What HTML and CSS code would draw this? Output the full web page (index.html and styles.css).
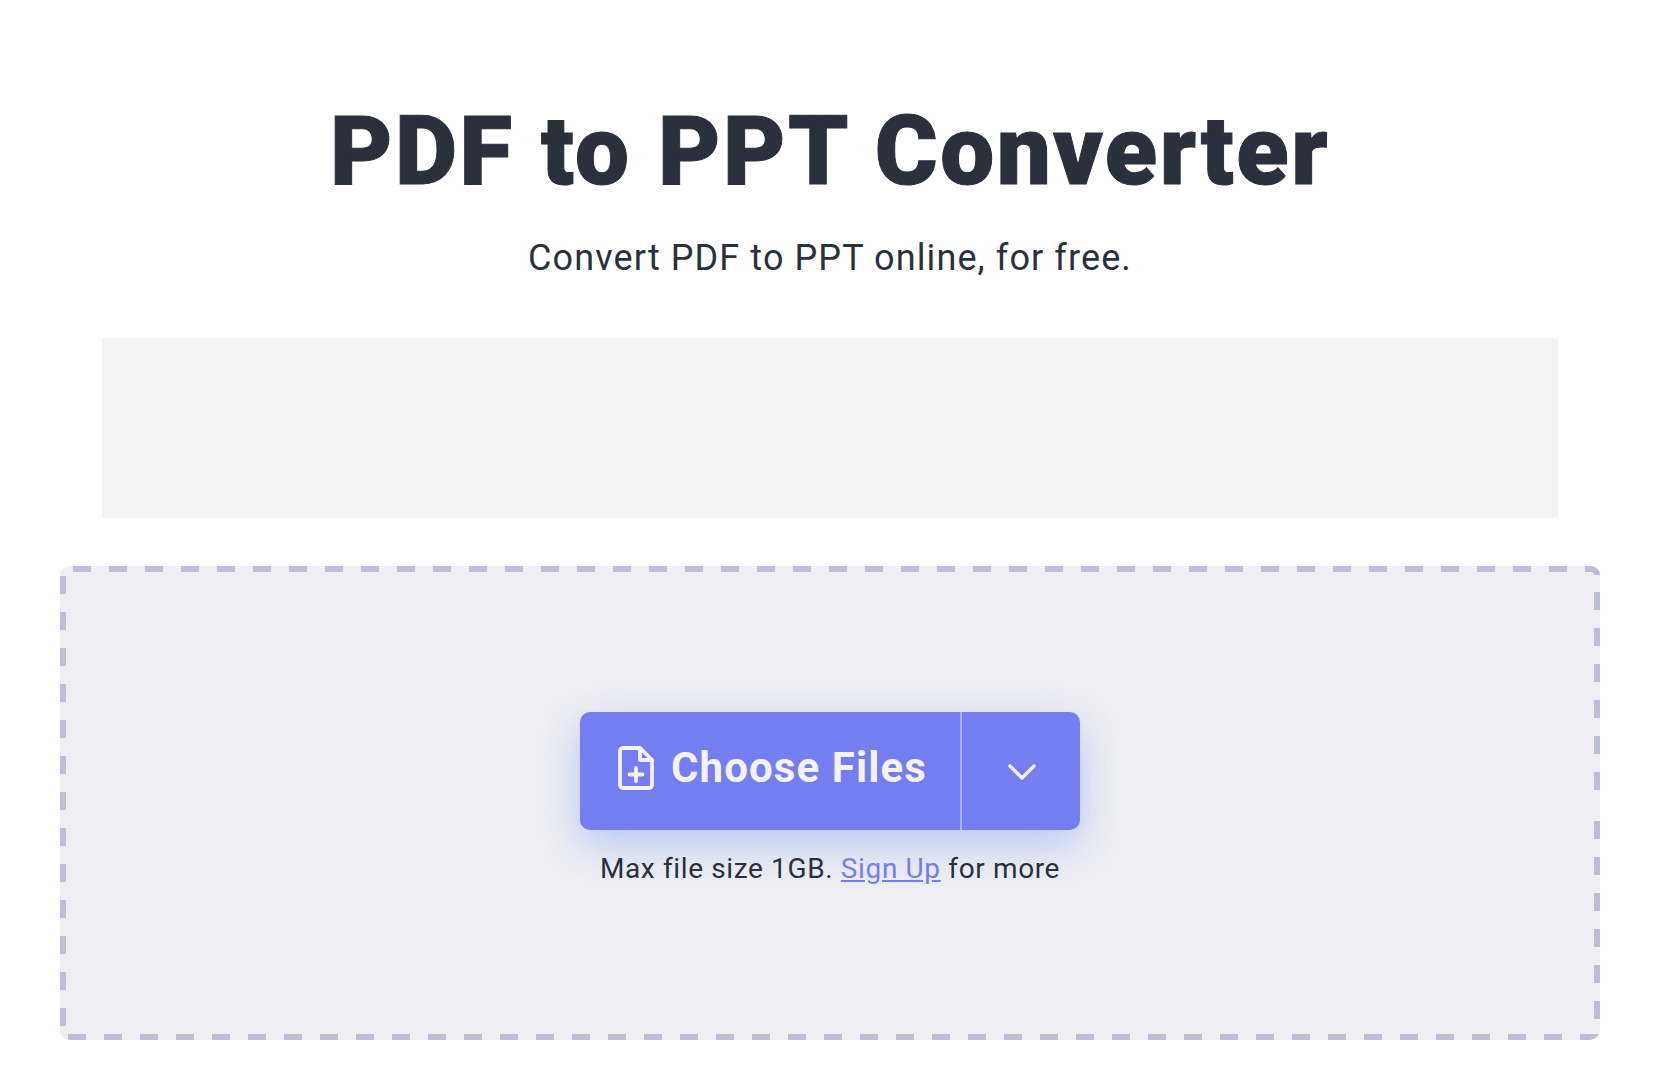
FILE: index.html
```html
<!DOCTYPE html>
<html lang="en">

<head>
  <meta charset="UTF-8">
  <meta name="viewport" content="width=device-width, initial-scale=1.0">
  <title>PDF to PPT Converter</title>
  <link rel="stylesheet" href="styles.css">
</head>

<body>

  <main class="page">
    <h1 class="title">PDF to PPT Converter</h1>
    <p class="subtitle">Convert PDF to PPT online, for free.</p>

    <!-- Ad slot -->
    <div class="ad-slot"></div>

    <div class="dropzone">
      <div class="choose-button">
        <div class="choose-main">
          <svg class="file-icon" viewBox="0 0 36 44" fill="none" stroke="currentColor" stroke-width="3.8" stroke-linecap="round" stroke-linejoin="round">
            <path d="M22 2H5a3 3 0 0 0-3 3v34a3 3 0 0 0 3 3h26a3 3 0 0 0 3-3V14z"/>
            <path d="M22 2v12h12"/>
            <path d="M18 22v13M11.500 28.500h13"/>
          </svg>
          <span class="choose-label">Choose Files</span>
        </div>
        <div class="choose-more">
          <svg class="chevron-icon" viewBox="0 0 28 16" fill="none" stroke="currentColor" stroke-width="3.4" stroke-linecap="round" stroke-linejoin="round">
            <path d="M2 2l12 12L26 2"/>
          </svg>
        </div>
      </div>
      <p class="limit">Max file size 1GB. <a href="#">Sign Up</a> for more</p>
    </div>
  </main>

</body>

</html>
```

FILE: styles.css
```css
body {
  font-family: 'Roboto', 'Liberation Sans', sans-serif;
  background-color: #fff;
  color: #2a303c;
  margin: 0;
  padding: 0;
}

.page {
  display: flex;
  flex-direction: column;
  align-items: center;
  padding: 95px 58px 38px 60px;
}

.title {
  font-size: 96px;
  font-weight: 900;
  line-height: 112px;
  letter-spacing: 2.5px;
  -webkit-text-stroke: 1px #2a303c;
  margin: 0;
}

.subtitle {
  font-size: 36px;
  line-height: 48px;
  letter-spacing: 1.1px;
  margin: 27px 0 0;
}

.ad-slot {
  width: 1456px;
  height: 180px;
  background-color: #f3f3f3;
  margin-top: 56px;
}

/* 18px dash, 18px gap: a dashed border can't be set to this length.
   The right edge has a longer gap part way down, so it takes two layers. */
.dropzone {
  position: relative;
  width: 100%;
  height: 474px;
  box-sizing: border-box;
  margin-top: 48px;
  padding-top: 146px;
  display: flex;
  flex-direction: column;
  align-items: center;
  background-color: #eeeef3;
  background-image:
    repeating-linear-gradient(90deg, #bebedb 0 18px, transparent 18px 36px),
    repeating-linear-gradient(90deg, #bebedb 0 18px, transparent 18px 36px),
    repeating-linear-gradient(180deg, #bebedb 0 18px, transparent 18px 36px),
    repeating-linear-gradient(180deg, #bebedb 0 18px, transparent 18px 36px),
    repeating-linear-gradient(180deg, #bebedb 0 18px, transparent 18px 36px);
  background-size: 100% 6px, 100% 6px, 6px 100%, 6px 198px, 6px 219px;
  background-position: 13px 0, 8px 100%, 0 10px, 100% 26px, 100% 255px;
  background-repeat: no-repeat;
  border-radius: 10px;
}

/* the dash that runs round the top right corner */
.dropzone::after {
  content: '';
  position: absolute;
  top: 0;
  right: 0;
  width: 15px;
  height: 9px;
  box-sizing: border-box;
  border-top: 6px solid #bebedb;
  border-right: 6px solid #bebedb;
  border-top-right-radius: 10px;
}

.choose-button {
  display: flex;
  width: 500px;
  height: 118px;
  color: #f3f3f3;
  background-color: #747ef1;
  border-radius: 10px;
  box-shadow: 0 14px 40px rgba(116, 150, 241, 0.45);
}

.choose-main {
  flex: 1;
  display: flex;
  align-items: center;
  gap: 17px;
  padding: 0 0 6px 38px;
  border-right: 2px solid #a9b2e8;
  font-size: 42px;
  font-weight: 700;
  letter-spacing: 1.1px;
}

.choose-label {
  margin-bottom: 2px;
}

.file-icon {
  width: 36px;
  height: 44px;
}

.choose-more {
  width: 118px;
  box-sizing: border-box;
  padding: 2px 0 0 2px;
  display: flex;
  align-items: center;
  justify-content: center;
}

.chevron-icon {
  width: 28px;
  height: 16px;
}

.limit {
  font-size: 28px;
  line-height: 38px;
  letter-spacing: 0.63px;
  margin: 20px 0 0;
}

.limit a {
  color: #747ef1;
}
```
